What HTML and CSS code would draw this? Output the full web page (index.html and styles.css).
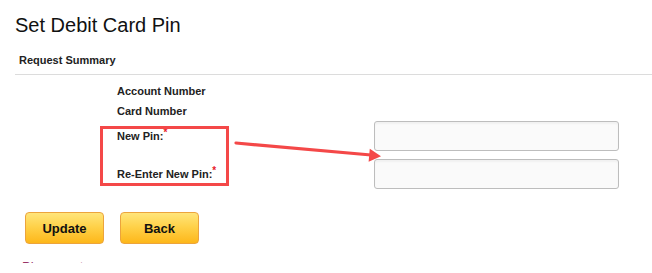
FILE: index.html
```html
<!DOCTYPE html>
<html>
<head>
<meta charset="utf-8">
<title>Set Debit Card Pin</title>
<link rel="stylesheet" href="styles.css">
</head>
<body>
<div class="page">
  <h1 class="title">Set Debit Card Pin</h1>
  <div class="section-head">Request Summary</div>
  <div class="form">
    <div class="row row-a"><div class="label">Account Number</div><div class="field"></div></div>
    <div class="row row-b"><div class="label">Card Number</div><div class="field"></div></div>
    <div class="row row-c"><div class="label">New Pin:<span class="req">*</span></div><div class="field"><input class="pin" type="password"></div></div>
    <div class="row row-d"><div class="label">Re-Enter New Pin:<span class="req">*</span></div><div class="field"><input class="pin" type="password"></div></div>
  </div>
  <div class="actions">
    <button class="btn">Update</button>
    <button class="btn">Back</button>
  </div>
  <div class="note"><span>Please note:</span></div>

  <div class="annot-box"></div>
  <svg class="annot-arrow" width="652" height="273" viewBox="0 0 652 273">
    <line x1="236" y1="143" x2="371" y2="155" stroke="#f44848" stroke-width="3.2" stroke-linecap="round"/>
    <polygon points="381,156.2 368.6,161.8 369.8,148.8" fill="#f44848"/>
  </svg>
</div>
</body>
</html>
```

FILE: styles.css
```css
html, body {
  margin: 0;
  padding: 0;
  background: #ffffff;
}

body {
  font-family: "Liberation Sans", Arial, sans-serif;
  color: #222;
}

.page {
  position: relative;
  width: 652px;
  height: 273px;
  overflow: hidden;
}

.title {
  margin: 14px 0 0 15px;
  font-size: 20px;
  font-weight: normal;
  line-height: 23px;
  color: #111;
}

.section-head {
  margin: 12px 0 0 15px;
  padding: 0 0 3px 4px;
  font-size: 11px;
  font-weight: bold;
  line-height: 22px;
  color: #222;
  border-bottom: 1px solid #dcdcdc;
}

.form {
  padding: 5px 0 0 117px;
  display: flex;
  flex-direction: column;
}

.row {
  display: flex;
  align-items: center;
}

.row-a { height: 21px; }
.row-b { height: 20px; }
.row-c { height: 30px; }
.row-d { height: 30px; margin-top: 8px; }

.label {
  width: 257px;
  font-size: 11px;
  font-weight: bold;
  color: #222;
}

.req {
  color: #e8202a;
  font-size: 10px;
  vertical-align: 4px;
  line-height: 0;
}

.field {
  width: 245px;
}

.pin {
  display: block;
  box-sizing: border-box;
  width: 245px;
  height: 30px;
  margin: 0;
  border: 1px solid #bdbdbd;
  border-radius: 3px;
  background: #fafafa;
  box-shadow: inset 0 2px 2px rgba(0, 0, 0, 0.04);
}

.actions {
  display: flex;
  gap: 16px;
  margin: 23px 0 0 25px;
}

.btn {
  box-sizing: border-box;
  width: 79px;
  height: 32px;
  margin: 0;
  padding: 0;
  border: 1px solid #eca43c;
  border-radius: 4px;
  background: linear-gradient(to bottom, #ffe57a 0%, #ffd24a 45%, #fdb71a 100%);
  font-family: "Liberation Sans", Arial, sans-serif;
  font-size: 13px;
  font-weight: bold;
  color: #111;
}

.note {
  margin: 16px 0 0 22px;
  height: 3px;
  overflow: hidden;
  font-size: 13px;
  line-height: 1;
  color: #993366;
}

.annot-box {
  position: absolute;
  left: 100px;
  top: 126px;
  width: 129px;
  height: 60px;
  box-sizing: border-box;
  border: 3px solid #f44848;
}

.annot-arrow {
  position: absolute;
  left: 0;
  top: 0;
}
```
